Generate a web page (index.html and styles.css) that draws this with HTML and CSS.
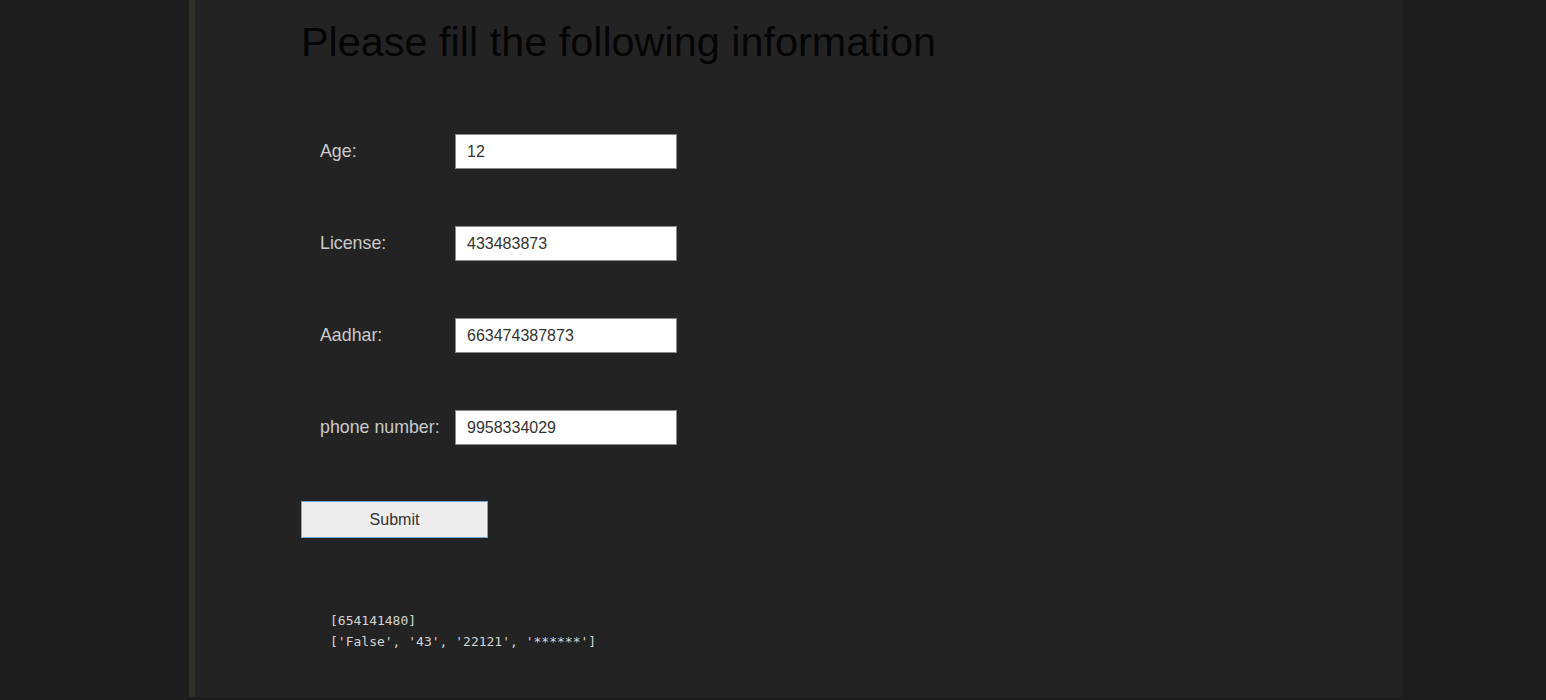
FILE: index.html
```html
<!DOCTYPE html>
<html>
<head>
<meta charset="utf-8">
<title>Form</title>
<link rel="stylesheet" href="styles.css">
</head>
<body>
<div class="page">
  <h1 class="title">Please fill the following information</h1>
  <form class="form">
    <div class="row">
      <label class="label">Age:</label>
      <input class="field" type="text" value="12">
    </div>
    <div class="row">
      <label class="label">License:</label>
      <input class="field" type="text" value="433483873">
    </div>
    <div class="row">
      <label class="label">Aadhar:</label>
      <input class="field" type="text" value="663474387873">
    </div>
    <div class="row">
      <label class="label">phone number:</label>
      <input class="field" type="text" value="9958334029">
    </div>
  </form>
  <button class="submit" type="button">Submit</button>
  <pre class="output">[654141480]
['False', '43', '22121', '******']</pre>
</div>
</body>
</html>
```

FILE: styles.css
```css
html, body {
  margin: 0;
  padding: 0;
}
body {
  background: #1d1d1d;
  font-family: "Liberation Sans", Arial, sans-serif;
  height: 700px;
  overflow: hidden;
}
.page {
  box-sizing: border-box;
  margin-left: 189px;
  width: 1214px;
  height: 697px;
  background: #232323;
  border-left: 6px solid #302f28;
  padding-left: 105px;
  padding-top: 19px;
  display: flex;
  flex-direction: column;
  align-items: flex-start;
}
.title {
  margin: 0 0 0 1px;
  font-size: 41.4px;
  line-height: 47px;
  font-weight: normal;
  color: #050505;
}
.form {
  margin-top: 68px;
  padding-left: 20px;
  display: flex;
  flex-direction: column;
  gap: 57px;
}
.row {
  display: flex;
  align-items: center;
}
.label {
  width: 135px;
  font-size: 17.8px;
  color: #cacaca;
}
.field {
  box-sizing: border-box;
  width: 222px;
  height: 35px;
  margin: 0;
  padding: 0 11px;
  border: 1px solid #8a8a8a;
  background: #ffffff;
  font-family: "Liberation Sans", Arial, sans-serif;
  font-size: 16px;
  color: #333333;
  outline: none;
}
.submit {
  box-sizing: border-box;
  margin-top: 56px;
  margin-left: 1px;
  width: 187px;
  height: 37px;
  background: #ededed;
  border: 1px solid #6ea7de;
  font-family: "Liberation Sans", Arial, sans-serif;
  font-size: 16px;
  color: #333333;
  padding: 0;
}
.output {
  margin: 72px 0 0 30px;
  font-family: "DejaVu Sans Mono", "Liberation Mono", monospace;
  font-size: 13px;
  line-height: 21px;
  color: #d4d4d4;
}
```
